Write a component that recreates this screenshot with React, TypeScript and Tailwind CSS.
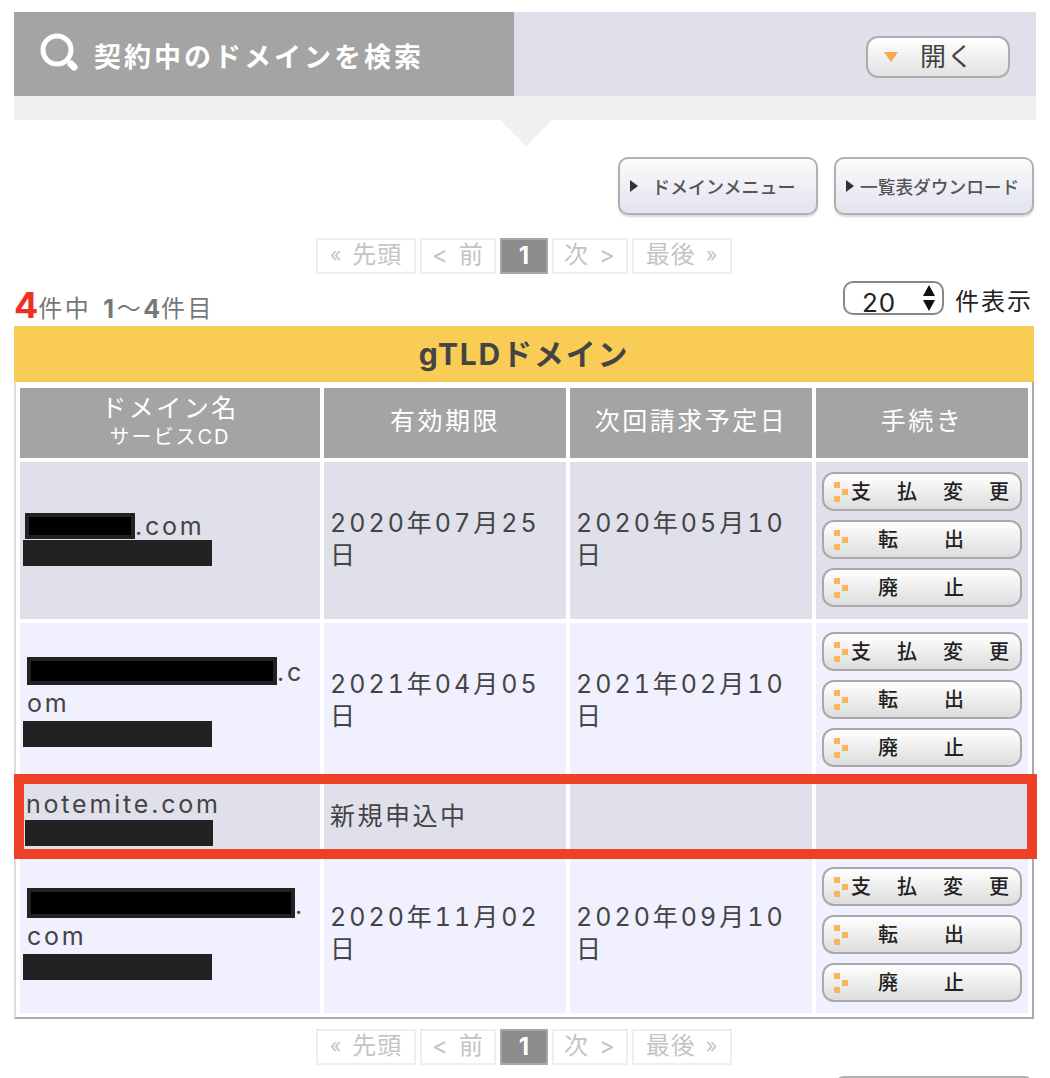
const FONT = "font-['Inter','Noto_Sans_CJK_JP',sans-serif]";

function Pager() {
  const box = "h-[36px] border-2 border-[#eeeeee] flex items-center justify-center text-[24px] leading-none text-[#c4c4c4] tracking-[1px] bg-white pb-[2px]";
  return (
    <div className="flex justify-center gap-[4px] w-[1020px]">
      <div className={box + " w-[100px] gap-[10px]"}><span className="text-[20px]">«</span><span>先頭</span></div>
      <div className={box + " w-[76px] gap-[10px]"}><span>&lt;</span><span>前</span></div>
      <div className="h-[36px] w-[48px] bg-[#8c8c8c] border-2 border-[#a8a8a8] flex items-center justify-center text-[24px] font-bold text-white">1</div>
      <div className={box + " w-[76px] gap-[10px]"}><span>次</span><span>&gt;</span></div>
      <div className={box + " w-[100px] gap-[10px]"}><span>最後</span><span className="text-[20px]">»</span></div>
    </div>
  );
}

function MenuButton({ label, w, size, gap }: { label: string; w: string; size: string; gap: string }) {
  return (
    <div className={w + " " + gap + " h-[58px] rounded-[10px] border-2 border-[#b0b0b0] bg-gradient-to-b from-[#fbfbfb] to-[#e2e3ee] shadow-[0_2px_2px_rgba(0,0,0,0.15)] flex items-center pl-[10px] text-[#555] font-medium"}>
      <svg width="8" height="12" viewBox="0 0 8 12" className="shrink-0"><path d="M0 0 L8 6 L0 12 Z" fill="#333" /></svg>
      <span className={size + " leading-none whitespace-nowrap mt-[3px]"}>{label}</span>
    </div>
  );
}

function ActionButton({ chars, start, gap }: { chars: string[]; start: string; gap: string }) {
  return (
    <div className="w-[200px] h-[39px] rounded-[12px] border-2 border-[#a9a9a9] bg-gradient-to-b from-[#ffffff] to-[#dddddd] flex items-center pl-[10px]">
      <svg width="16" height="20" viewBox="0 0 16 20" className="shrink-0">
        <rect x="0" y="0" width="6" height="6" fill="#f7b75a" />
        <rect x="8" y="7" width="6" height="6" fill="#f7b75a" />
        <rect x="0" y="14" width="6" height="6" fill="#f7b75a" />
      </svg>
      <div className={start + " " + gap + " flex text-[20px] leading-none font-medium text-[#222]"}>
        {chars.map((c) => (
          <span key={c}>{c}</span>
        ))}
      </div>
    </div>
  );
}

function Actions() {
  return (
    <div className="flex flex-col gap-[9px]">
      <ActionButton chars={["支", "払", "変", "更"]} start="ml-[1px]" gap="gap-[26px]" />
      <ActionButton chars={["転", "出"]} start="ml-[28px]" gap="gap-[46px]" />
      <ActionButton chars={["廃", "止"]} start="ml-[28px]" gap="gap-[46px]" />
    </div>
  );
}

function Mask({ w, h }: { w: string; h: string }) {
  return <span className={w + " " + h + " inline-block align-[-4px] bg-black border-[4px] border-[#222222]"} />;
}

function Code({ w, ml, mt }: { w: string; ml: string; mt: string }) {
  return <div className={w + " " + ml + " " + mt + " h-[26px] bg-[#222222]"} />;
}

const head = "bg-[#a4a4a4] text-white flex items-center justify-center text-[25px] leading-[32px] tracking-[2.5px] pb-[4px]";

function DateCell({ text, bg }: { text: string; bg: string }) {
  return (
    <div className={bg + " flex items-center px-[6px] pb-[4px] text-[25px] leading-[32px] tracking-[3px] tabular-nums text-[#444]"}>
      <div>{text}<br />日</div>
    </div>
  );
}

export default function App() {
  const odd = "bg-[#dfe0ea]";
  const even = "bg-[#f0f0fe]";
  return (
    <div className={FONT + " relative w-[1050px] h-[1078px] overflow-hidden bg-white pt-[12px] pl-[14px]"}>
      <div className="relative w-[1022px]">
        <div className="flex h-[84px]">
          <div className="w-[500px] bg-[#a4a4a4] flex items-center pl-[25px] gap-[15px]">
            <svg width="40" height="38" viewBox="0 0 40 38" className="blur-[0.7px] shrink-0 mt-[-4px]">
              <circle cx="18" cy="17" r="14" fill="none" stroke="#ffffff" strokeWidth="5" />
              <path d="M32 31 L35 34" stroke="#ffffff" strokeWidth="7" strokeLinecap="round" />
            </svg>
            <span className="text-[27px] leading-none font-bold text-white tracking-[3px] mt-[6px] whitespace-nowrap">契約中のドメインを検索</span>
          </div>
          <div className="flex-1 bg-[#dfe0ea] flex items-center justify-end pr-[26px]">
            <div className="mt-[6px] w-[144px] h-[42px] rounded-[12px] border-2 border-[#adadad] bg-gradient-to-b from-[#ffffff] to-[#e2e2e2] flex items-center pl-[16px] text-[#444] text-[26px] leading-none">
              <svg width="14" height="10" viewBox="0 0 14 10" className="shrink-0"><path d="M0 0 H14 L7 10 Z" fill="#f6ab4a" /></svg>
              <span className="ml-[22px] tracking-[1px]">開く</span>
            </div>
          </div>
        </div>
        <div className="h-[24px] bg-[#f0f0f0]" />
        <svg width="52" height="26" viewBox="0 0 52 26" className="absolute left-[486px] top-[108px]">
          <path d="M0 0 H52 L26 26 Z" fill="#f0f0f0" />
        </svg>
      </div>

      <div className="mt-[37px] w-[1020px] flex justify-end gap-[16px]">
        <MenuButton label="ドメインメニュー" w="w-[200px]" size="text-[18px]" gap="gap-[14px]" />
        <MenuButton label="一覧表ダウンロード" w="w-[200px]" size="text-[17.7px]" gap="gap-[6px]" />
      </div>

      <div className="mt-[23px]"><Pager /></div>

      <div className="w-[1020px] h-[52px] flex justify-between items-end pb-[3px]">
        <div className="flex items-end text-[#777] text-[24px] leading-[28px] tracking-[2.5px]">
          <span className="text-[36px] leading-[36px] font-bold text-[#ee3124] tracking-normal">4</span>
          <span>件中</span>
          <span className="ml-[12px] font-bold text-[25px]">1</span>
          <span>～</span>
          <span className="font-bold text-[25px] tracking-[1px]">4</span>
          <span>件目</span>
        </div>
        <div className="flex items-center gap-[11px] pr-[1px]">
          <div className="w-[101px] h-[34px] rounded-[10px] border-2 border-[#888] flex items-start justify-between pl-[17px] pr-[6px] overflow-hidden text-[26px] leading-[40px] text-[#222] tracking-[1px] mb-[8px]">
            <span>20</span>
            <svg width="14" height="26" viewBox="0 0 14 26" className="mt-[2px] shrink-0">
              <path d="M7 0 L13 11 H1 Z M1 15 H13 L7 26 Z" fill="#111" />
            </svg>
          </div>
          <span className="text-[24px] leading-[28px] text-[#222] tracking-[2px]">件表示</span>
        </div>
      </div>

      <div className="w-[1020px] h-[56px] bg-[#f8cc55] flex items-center justify-center text-[30px] font-bold text-[#444] tracking-[1.8px] leading-none">gTLDドメイン</div>

      <div className="w-[1020px] border-2 border-t-0 border-l-[#dddddd] border-r-[#aaaaaa] border-b-[#aaaaaa] p-[4px] pt-[6px] pb-[4px] grid grid-cols-[300px_242px_242px_212px] grid-rows-[70px_157px_157px_68px_157px] gap-[4px]">
        <div className={head + " flex-col"}>
          <div>ドメイン名</div>
          <div className="text-[20px] leading-[26px] tracking-[2px]">サービスCD</div>
        </div>
        <div className={head}>有効期限</div>
        <div className={head}>次回請求予定日</div>
        <div className={head}>手続き</div>

        <div className={odd + " flex flex-col justify-center pb-[4px] text-[25px] leading-[28px] tracking-[2.8px] text-[#444]"}>
          <div className="pl-[5px]"><Mask w="w-[110px]" h="h-[26px]" />.com</div>
          <Code w="w-[189px]" ml="ml-[3px]" mt="mt-0" />
        </div>
        <DateCell text="2020年07月25" bg={odd} />
        <DateCell text="2020年05月10" bg={odd} />
        <div className={odd + " flex items-center justify-center pb-[2px]"}><Actions /></div>

        <div className={even + " flex flex-col justify-center text-[25px] leading-[31px] tracking-[2.8px] text-[#444]"}>
          <div className="pl-[7px]"><Mask w="w-[250px]" h="h-[28px]" />.c<br />om</div>
          <Code w="w-[189px]" ml="ml-[3px]" mt="mt-[2px]" />
        </div>
        <DateCell text="2021年04月05" bg={even} />
        <DateCell text="2021年02月10" bg={even} />
        <div className={even + " flex items-center justify-center pb-[4px]"}><Actions /></div>

        <div className={odd + " flex flex-col justify-center pb-[1px] text-[25px] leading-[28px] tracking-[2.8px] text-[#444]"}>
          <div className="pl-[6px]">notemite.com</div>
          <Code w="w-[188px]" ml="ml-[5px]" mt="mt-[2px]" />
        </div>
        <div className={odd + " flex items-center px-[6px] pb-[5px] text-[25px] leading-[32px] tracking-[2.5px] text-[#444]"}>新規申込中</div>
        <div className={odd} />
        <div className={odd} />

        <div className={even + " flex flex-col justify-center pb-[2px] text-[25px] leading-[31px] tracking-[2.8px] text-[#444]"}>
          <div className="pl-[7px]"><Mask w="w-[268px]" h="h-[30px]" />.<br />com</div>
          <Code w="w-[189px]" ml="ml-[3px]" mt="mt-[2px]" />
        </div>
        <DateCell text="2020年11月02" bg={even} />
        <DateCell text="2020年09月10" bg={even} />
        <div className={even + " flex items-center justify-center"}><Actions /></div>
      </div>

      <div className="mt-[10px]"><Pager /></div>

      <div className="mt-[11px] w-[1020px] flex justify-end">
        <div className="w-[200px] h-[58px] rounded-[10px] border-2 border-[#b0b0b0] bg-gradient-to-b from-[#fbfbfb] to-[#e2e3ee]" />
      </div>

      <div className="absolute left-[14px] top-[774px] w-[1023px] h-[85px] border-[10px] border-[#ee3f27]" />
    </div>
  );
}
